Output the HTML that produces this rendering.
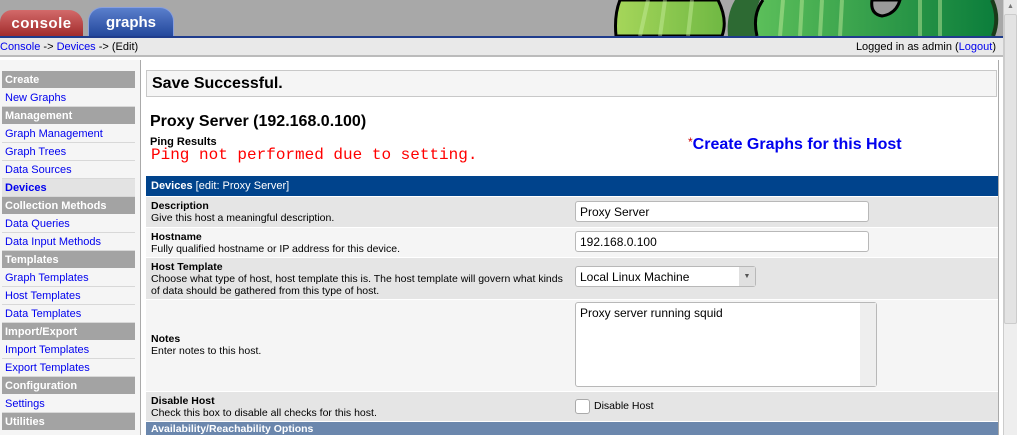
<!DOCTYPE html>
<html><head><style>
*{margin:0;padding:0;box-sizing:border-box}
body{width:1017px;height:435px;overflow:hidden;font-family:"Liberation Sans",sans-serif;font-size:11px;background:#fff;position:relative}
.abs{position:absolute}
a{color:#0000ee;text-decoration:none}
.side div{position:absolute;left:2px;width:133px;height:18px;line-height:18px;padding-left:3px;font-size:11px}
.side .h{background:#a3a3a3;color:#fff;font-weight:bold;height:17px}
.side .l{border-bottom:1px solid #d8d8d8;color:#0000ee}
.row{position:absolute;left:146px;width:852px;border-bottom:1px solid #fff}
.row .t{position:absolute;left:5px;top:3px;line-height:12px;font-size:10.5px}
.row b{font-size:10.5px}
.inp{position:absolute;left:429px;width:294px;height:21px;border:1px solid #b8b8b8;border-radius:3px;background:#fff;font-size:12px;padding:3px 4px}
</style></head><body>
<div class="abs" style="left:0;top:0;width:1003px;height:36px;background:#a8a8a8"></div>
<svg class="abs" style="left:600px;top:0" width="403" height="36">
<defs>
<linearGradient id="g1" x1="0" x2="1"><stop offset="0" stop-color="#a6d65a"/><stop offset="1" stop-color="#6fb843"/></linearGradient>
<linearGradient id="g2" x1="0" x2="1"><stop offset="0" stop-color="#5cbf5a"/><stop offset="1" stop-color="#0b7d3b"/></linearGradient>
</defs>
<path d="M16 36 Q14 15 20 0 L118 0 Q128 20 122 36Z" fill="url(#g1)" stroke="#000" stroke-width="3"/>
<path d="M128 36 Q126 15 135 0 L160 0 Q152 18 157 36Z" fill="#2d6a33"/>
<path d="M157 36 Q152 15 163 0 L392 0 Q400 18 393 36Z" fill="url(#g2)"/>
<path d="M157 36 Q152 15 163 0" fill="none" stroke="#000" stroke-width="3"/>
<path d="M392 0 Q400 18 393 36" fill="none" stroke="#1a3a1a" stroke-width="4"/>
<path d="M272 0 Q270 14 282 16 Q296 14 300 0Z" fill="#9a9a9a" stroke="#000" stroke-width="3"/>
<path d="M40 36 L48 0 M60 36 L65 0 M88 36 L92 0 M180 36 L183 0 M200 36 L202 0 M220 36 L222 0 M240 36 L242 0 M320 36 L320 0 M340 36 L340 0" stroke="#c8ee9f" stroke-width="4" opacity=".45"/>
</svg>
<div class="abs" style="left:0;top:10px;width:83px;height:27px;background:linear-gradient(#d36a6a,#a02a2a);border-radius:12px 14px 0 0;color:#fff;font:bold 15px 'Liberation Sans',sans-serif;text-align:center;line-height:28px;letter-spacing:.5px">console</div>
<div class="abs" style="left:88px;top:7px;width:86px;height:30px;background:linear-gradient(#5a7fcc,#22469a);border-radius:14px 14px 0 0;border:1px solid #8aa0dd;border-bottom:none;color:#fff;font:bold 15px 'Liberation Sans',sans-serif;text-align:center;line-height:30px">graphs</div>
<div class="abs" style="left:0;top:36px;width:1003px;height:2px;background:#1f3c8c"></div>
<div class="abs" style="left:0;top:38px;width:1003px;height:19px;background:#e9e9e9;border-bottom:2px solid #bbb;line-height:18px;font-size:11px"><a>Console</a> -&gt; <a>Devices</a> -&gt; (Edit)<span style="position:absolute;right:7px">Logged in as admin (<a>Logout</a>)</span></div>
<div class="abs" style="left:1003px;top:0;width:14px;height:435px;background:#eee;border-left:1px solid #ccc"></div>
<div class="abs" style="left:1004px;top:0;width:13px;height:14px;background:#e8e8e8;color:#777;font-size:7px;text-align:center;line-height:14px">▲</div>
<div class="abs" style="left:1004px;top:14px;width:13px;height:310px;background:#e3e3e3;border:1px solid #ccc;border-radius:2px"></div>
<div class="abs" style="left:0;top:60px;width:141px;height:375px;background:#f5f5f5;border-right:1px solid #aaa"></div>
<div class="side">
<div class="h" style="top:71px">Create</div>
<div class="l" style="top:89px">New Graphs</div>
<div class="h" style="top:107px">Management</div>
<div class="l" style="top:125px">Graph Management</div>
<div class="l" style="top:143px">Graph Trees</div>
<div class="l" style="top:161px">Data Sources</div>
<div class="l" style="top:179px;background:#e3e3e3;font-weight:bold">Devices</div>
<div class="h" style="top:197px">Collection Methods</div>
<div class="l" style="top:215px">Data Queries</div>
<div class="l" style="top:233px">Data Input Methods</div>
<div class="h" style="top:251px">Templates</div>
<div class="l" style="top:269px">Graph Templates</div>
<div class="l" style="top:287px">Host Templates</div>
<div class="l" style="top:305px">Data Templates</div>
<div class="h" style="top:323px">Import/Export</div>
<div class="l" style="top:341px">Import Templates</div>
<div class="l" style="top:359px">Export Templates</div>
<div class="h" style="top:377px">Configuration</div>
<div class="l" style="top:395px">Settings</div>
<div class="h" style="top:413px">Utilities</div>
</div>
<div class="abs" style="left:146px;top:70px;width:851px;height:27px;border:1px solid #c8c8c8;background:#f5f5f5;font-weight:bold;font-size:16px;line-height:25px;padding-left:5px">Save Successful.</div>
<div class="abs" style="left:150px;top:113px;font-weight:bold;font-size:16px">Proxy Server (192.168.0.100)</div>
<div class="abs" style="left:150px;top:136px;font-weight:bold;font-size:11px">Ping Results</div>
<div class="abs" style="left:151px;top:146px;color:#f00;font:16px 'Liberation Mono',monospace">Ping not performed due to setting.</div>
<div class="abs" style="left:688px;top:135px;font-weight:bold;font-size:16px;color:#0000ee"><span style="color:#c00;font-weight:normal;font-size:12px;vertical-align:3px">*</span>Create Graphs for this Host</div>
<div class="abs" style="left:146px;top:176px;width:852px;height:20px;background:#00438c;color:#fff;font-size:11px;line-height:21px;padding-left:5px"><b>Devices</b> [edit: Proxy Server]</div>
<div class="row" style="top:197px;height:31px;background:#e5e5e5"><div class="t"><b>Description</b><br>Give this host a meaningful description.</div><div class="inp" style="top:4px">Proxy Server</div></div>
<div class="row" style="top:228px;height:30px;background:#f5f5f5"><div class="t"><b>Hostname</b><br>Fully qualified hostname or IP address for this device.</div><div class="inp" style="top:3px">192.168.0.100</div></div>
<div class="row" style="top:258px;height:42px;background:#e5e5e5"><div class="t"><b>Host Template</b><br>Choose what type of host, host template this is. The host template will govern what kinds<br>of data should be gathered from this type of host.</div><div class="inp" style="top:8px;width:181px">Local Linux Machine<span style="position:absolute;right:0;top:0;width:16px;height:19px;background:#e0e0e0;font-size:7px;text-align:center;line-height:19px;color:#555">▼</span></div></div>
<div class="row" style="top:300px;height:92px;background:#f5f5f5"><div class="t" style="top:33px"><b>Notes</b><br>Enter notes to this host.</div><div class="inp" style="top:2px;width:302px;height:85px">Proxy server running squid<span style="position:absolute;right:0;top:0;width:16px;height:83px;background:#eee"></span></div></div>
<div class="row" style="top:392px;height:30px;background:#e5e5e5"><div class="t"><b>Disable Host</b><br>Check this box to disable all checks for this host.</div><div class="abs" style="left:429px;top:7px;width:15px;height:15px;border:1px solid #aaa;border-radius:3px;background:#fff"></div><div class="abs" style="left:448px;top:8px;font-size:10.5px">Disable Host</div></div>
<div class="abs" style="left:146px;top:422px;width:852px;height:13px;background:#6b87ad;color:#fff;font-weight:bold;font-size:10.5px;padding-left:5px;line-height:15px">Availability/Reachability Options</div>
<div class="abs" style="left:998px;top:60px;width:1px;height:375px;background:#aaa"></div>
</body></html>
